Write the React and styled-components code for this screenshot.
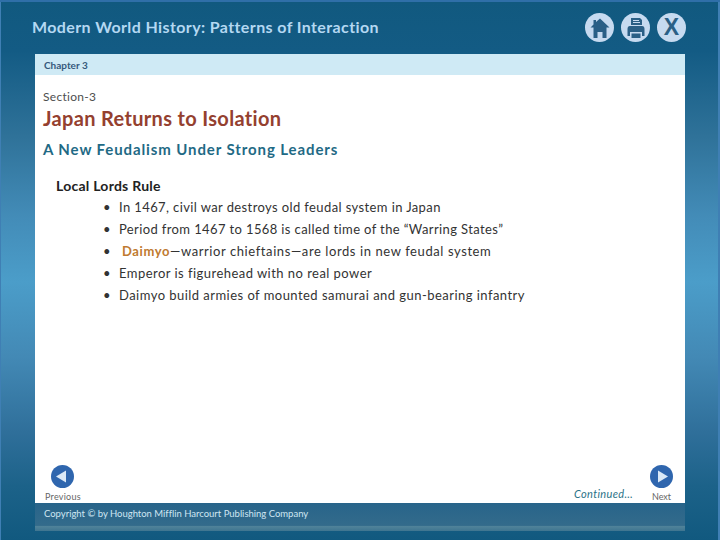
import React from 'react';
import styled, {createGlobalStyle} from 'styled-components';

const GlobalStyle = createGlobalStyle`
    html, body {
        margin: 0;
        padding: 0;
    }
    body {
        font-family: Lato, "Open Sans", sans-serif;
    }
`

const Page = styled.div`
    width: 720px;
    height: 540px;
    box-sizing: border-box;
    overflow: hidden;
    display: flex;
    flex-direction: column;
    padding: 0 35px;
    border-top: 2px solid #2f6fa8;
    box-shadow: inset 1px 0 0 #3f7fb4, inset -2px 0 0 #3f7fb4;
    background: linear-gradient(180deg, #11597f 0%, #135b84 9%, #2f7299 25%, #438cb8 40%, #4b9dc9 52%, #4389b5 66%, #2f6f9a 80%, #1c6289 90%, #11597f 100%);
`

const Header = styled.header`
    height: 52px;
    display: flex;
    align-items: center;
    justify-content: space-between;
`

const Title = styled.h1`
    margin: -3px 0 0 -3px;
    font-size: 16px;
    font-weight: 700;
    letter-spacing: 0.39px;
    color: #b4d8f2;
`

const Tools = styled.div`
    display: flex;
    gap: 7px;
    margin: -1px -1px 0 0;
`

const RoundTool = styled.div`
    width: 29px;
    height: 29px;
    border-radius: 50%;
    background: #c6daf0;
    display: flex;
    align-items: center;
    justify-content: center;
    color: #2a5f86;
    font-family: "Liberation Sans", sans-serif;
    font-size: 23px;
    font-weight: 700;
    line-height: 29px;
`

const ChapterBar = styled.div`
    height: 21px;
    display: flex;
    align-items: center;
    padding-left: 9px;
    background: #cfeaf5;
    color: #35597c;
    font-size: 10px;
    font-weight: 700;
`

const Sheet = styled.main`
    height: 428px;
    box-sizing: border-box;
    background: #fff;
    display: flex;
    flex-direction: column;
    padding: 13px 0 0 8px;
`

const Section = styled.div`
    font-size: 12px;
    line-height: 17px;
    letter-spacing: 0.3px;
    color: #4e4e4e;
`

const Heading = styled.h2`
    margin: 0;
    font-size: 20px;
    line-height: 26px;
    font-weight: 700;
    letter-spacing: 0.33px;
    color: #94402f;
`

const Subheading = styled.h3`
    margin: 8px 0 0;
    font-size: 15px;
    line-height: 20px;
    font-weight: 700;
    letter-spacing: 0.9px;
    color: #1f6a85;
`

const TopicTitle = styled.div`
    margin: 17px 0 0 13px;
    font-size: 14px;
    line-height: 20px;
    font-weight: 700;
    letter-spacing: 0.25px;
    color: #222;
`

const Points = styled.ul`
    list-style: none;
    margin: 0;
    padding: 0 0 0 60px;
`

const Point = styled.li`
    position: relative;
    height: 22px;
    padding-left: 16px;
    font-size: 13px;
    line-height: 22px;
    letter-spacing: ${props => props.$spacing}px;
    color: #333;
    &::before {
        content: "•";
        position: absolute;
        left: 0;
        color: #333;
    }
`

const Term = styled.span`
    margin-left: 3px;
    font-weight: 700;
    color: #c07a30;
`

const Nav = styled.nav`
    margin-top: auto;
    display: flex;
    align-items: flex-end;
    justify-content: space-between;
    padding: 0 12px 1px 2px;
`

const NavItem = styled.div`
    display: flex;
    flex-direction: column;
    align-items: center;
    gap: 3px;
    color: #666;
    font-size: 9px;
    line-height: 11px;
    letter-spacing: ${props => props.$wide ? '0.25px' : '0'};
`

const NavGroup = styled.div`
    display: flex;
    align-items: flex-end;
    gap: 17px;
`

const Continued = styled.span`
    margin-bottom: 1px;
    font-size: 11px;
    line-height: 14px;
    font-style: italic;
    letter-spacing: 0.35px;
    color: #2b7287;
`

const Footer = styled.footer`
    height: 28px;
    box-sizing: border-box;
    display: flex;
    align-items: flex-start;
    padding: 5px 0 0 9px;
    background: linear-gradient(180deg, #28648a 0%, #336b8b 80%, #4f8299 84%, #3f7590 100%);
    color: #cfe6f2;
    font-size: 9.5px;
    line-height: 12px;
    letter-spacing: -0.01px;
`

const HomeIcon = () => (
    <svg width="22" height="22" viewBox="-11 -11 22 22">
        <path fill="currentColor" d="M0 -9.5 L9.5 -0.5 H6.5 V10 H2.5 V4 H-2.5 V10 H-6.5 V-0.5 H-9.5 L-6.5 -3.5 V-8 H-4 V-6 Z" />
    </svg>
)

const PrintIcon = () => (
    <svg width="22" height="22" viewBox="-11 -11 22 22">
        <path fill="currentColor" fillRule="evenodd" d="M-5 -10 H4 L6 -8 V-3 H-5 Z M-3 -8 V-7 H3 V-8 Z M-3 -6 V-5 H4 V-6 Z" />
        <path fill="currentColor" d="M-6 -2 H6 Q8.5 -2 8.5 1 V8 H6 V4 H-6 V8 H-8.5 V1 Q-8.5 -2 -6 -2 Z M-4.5 5.5 H4.5 V10 H-4.5 Z" />
    </svg>
)

const ArrowButton = ({back}) => (
    <svg width="23" height="23" viewBox="0 0 23 23">
        <circle cx="11.5" cy="11.5" r="11.5" fill="#2f66ae" />
        <path fill="#dbe9f7" d={back ? "M5 11.5 L15 5.5 V17.5 Z" : "M18 11.5 L8 5.5 V17.5 Z"} />
    </svg>
)

const points = [
    {spacing: 0.39, text: 'In 1467, civil war destroys old feudal system in Japan'},
    {spacing: 0.38, text: 'Period from 1467 to 1568 is called time of the “Warring States”'},
    {spacing: 0.59, text: <><Term>Daimyo</Term>—warrior chieftains—are lords in new feudal system</>},
    {spacing: 0.46, text: 'Emperor is figurehead with no real power'},
    {spacing: 0.46, text: 'Daimyo build armies of mounted samurai and gun-bearing infantry'}
];

export default function App() {
    return (
        <Page>
            <GlobalStyle />
            <Header>
                <Title>Modern World History: Patterns of Interaction</Title>
                <Tools>
                    <RoundTool><HomeIcon /></RoundTool>
                    <RoundTool><PrintIcon /></RoundTool>
                    <RoundTool>X</RoundTool>
                </Tools>
            </Header>
            <ChapterBar>Chapter 3</ChapterBar>
            <Sheet>
                <Section>Section-3</Section>
                <Heading>Japan Returns to Isolation</Heading>
                <Subheading>A New Feudalism Under Strong Leaders</Subheading>
                <TopicTitle>Local Lords Rule</TopicTitle>
                <Points>
                    {points.map((point, i) => <Point key={i} $spacing={point.spacing}>{point.text}</Point>)}
                </Points>
                <Nav>
                    <NavItem $wide>
                        <ArrowButton back />
                        Previous
                    </NavItem>
                    <NavGroup>
                        <Continued>Continued…</Continued>
                        <NavItem>
                            <ArrowButton />
                            Next
                        </NavItem>
                    </NavGroup>
                </Nav>
            </Sheet>
            <Footer>Copyright © by Houghton Mifflin Harcourt Publishing Company</Footer>
        </Page>
    );
}
